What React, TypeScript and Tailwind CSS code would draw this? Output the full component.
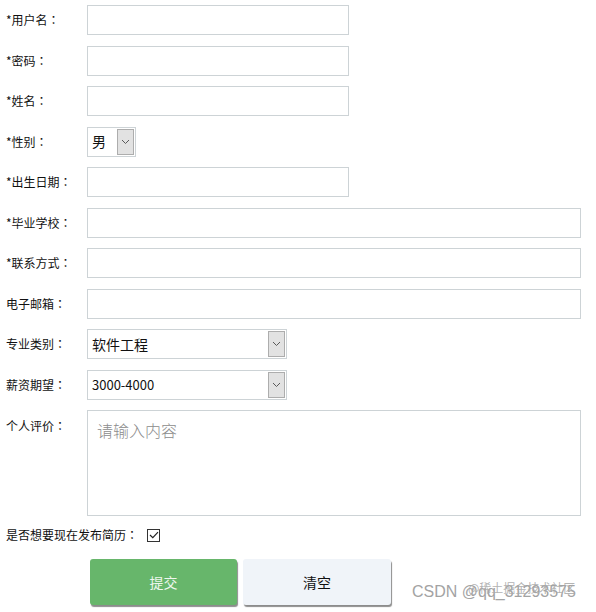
import React from "react";

const font = { fontFamily: '"Noto Sans CJK SC", "Noto Sans", sans-serif' };
const tcFont = { fontFamily: '"Noto Sans CJK TC", "Noto Sans CJK SC", sans-serif' };

function Chevron() {
  return (
    <svg width="9" height="6" viewBox="0 0 9 6" fill="none">
      <path d="M1 1 L4.5 4.5 L8 1" stroke="#5a5a5a" strokeWidth="1" />
    </svg>
  );
}

function Colon() {
  return <span style={tcFont}>：</span>;
}

function Label({ children }: { children: React.ReactNode }) {
  return (
    <div className="w-[87px] shrink-0 pl-[6px] text-[12px] text-[#111] leading-none">
      {children}
      <Colon />
    </div>
  );
}

function TextInput({ wide }: { wide?: boolean }) {
  return (
    <div
      className={`${wide ? "w-[494px]" : "w-[262px]"} h-[30px] border border-[#cdd3d6] bg-white`}
    />
  );
}

function Select({
  width,
  value,
  textClass,
}: {
  width: string;
  value: string;
  textClass: string;
}) {
  return (
    <div className={`${width} h-[30px] border border-[#cdd3d6] bg-white flex items-stretch`}>
      <div className={`flex-1 flex items-center pl-[4px] text-[#111] ${textClass}`}>{value}</div>
      <div className="w-[17px] my-[1px] mr-[1px] border border-[#adadad] bg-[#e2e2e2] flex items-center justify-center">
        <Chevron />
      </div>
    </div>
  );
}

function Row({ label, children }: { label: string; children: React.ReactNode }) {
  return (
    <div className="flex items-center h-[30px]">
      <Label>{label}</Label>
      {children}
    </div>
  );
}

export default function App() {
  return (
    <div className="relative w-[596px] h-[612px] bg-white overflow-hidden" style={font}>
      <div className="pt-[5px] flex flex-col gap-y-[10.5px]">
        <Row label="*用户名">
          <TextInput />
        </Row>
        <Row label="*密码">
          <TextInput />
        </Row>
        <Row label="*姓名">
          <TextInput />
        </Row>
        <Row label="*性别">
          <Select width="w-[49px]" value="男" textClass="text-[14px]" />
        </Row>
        <Row label="*出生日期">
          <TextInput />
        </Row>
        <Row label="*毕业学校">
          <TextInput wide />
        </Row>
        <Row label="*联系方式">
          <TextInput wide />
        </Row>
        <Row label="电子邮箱">
          <TextInput wide />
        </Row>
        <Row label="专业类别">
          <Select width="w-[200px]" value="软件工程" textClass="text-[14px]" />
        </Row>
        <Row label="薪资期望">
          <Select width="w-[200px]" value="3000-4000" textClass="text-[13px]" />
        </Row>
        <div className="flex items-start">
          <div className="pt-[10px]">
            <Label>个人评价</Label>
          </div>
          <div className="w-[494px] h-[106px] border border-[#cdd3d6] bg-white pl-[9px] pt-[9px] text-[16px] text-[#8c8c8c] font-light leading-tight">
            请输入内容
          </div>
        </div>
      </div>

      <div className="flex items-center h-[20px] mt-[9px] pl-[6px]">
        <span className="text-[12px] text-[#111] leading-none">
          是否想要现在发布简历
          <Colon />
        </span>
        <span className="ml-[9px] w-[13px] h-[13px] border border-[#333] flex items-center justify-center bg-white">
          <svg width="10" height="8" viewBox="0 0 10 8" fill="none">
            <path d="M1 4 L3.8 6.6 L9 1.2" stroke="#222" strokeWidth="1.2" />
          </svg>
        </span>
      </div>

      <div className="flex gap-[6px] pl-[90px] mt-[14px]">
        <button className="w-[147px] h-[46px] rounded-[3px] bg-[#67b66b] text-[#eef7ee] text-[14px] shadow-[1px_2px_1px_rgba(0,0,0,0.45)] flex items-center justify-center">
          提交
        </button>
        <button className="w-[148px] h-[46px] rounded-[3px] bg-[#f0f4f9] text-[#111] text-[14px] shadow-[1px_2px_1px_rgba(0,0,0,0.45)] flex items-center justify-center">
          清空
        </button>
      </div>

      <div
        className="absolute left-[412px] top-[584px] text-[16px] text-[#a3a3a3] leading-none"
        style={{ fontFamily: '"Liberation Sans", Arial, sans-serif' }}
      >
        CSDN @qq_31293575
      </div>
      <div className="absolute left-[468px] top-[582px] text-[12px] text-[#aaaaaa]/90 leading-none">
        @稀土掘金技术社区
      </div>
    </div>
  );
}
